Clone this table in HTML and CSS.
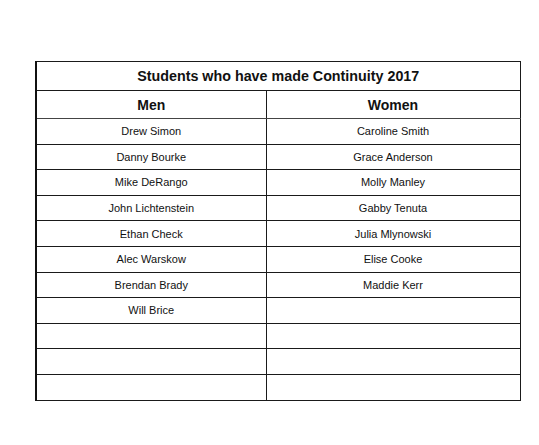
FILE: index.html
```html
<!DOCTYPE html>
<html>
<head>
<meta charset="utf-8">
<link rel="stylesheet" href="styles.css">
</head>
<body>
<table class="roster">
  <colgroup><col class="col-men"><col class="col-women"></colgroup>
  <tr class="title-row"><th colspan="2">Students who have made Continuity 2017</th></tr>
  <tr class="head-row"><th>Men</th><th>Women</th></tr>
  <tr><td>Drew Simon</td><td>Caroline Smith</td></tr>
  <tr><td>Danny Bourke</td><td>Grace Anderson</td></tr>
  <tr><td>Mike DeRango</td><td>Molly Manley</td></tr>
  <tr><td>John Lichtenstein</td><td>Gabby Tenuta</td></tr>
  <tr><td>Ethan Check</td><td>Julia Mlynowski</td></tr>
  <tr><td>Alec Warskow</td><td>Elise Cooke</td></tr>
  <tr><td>Brendan Brady</td><td>Maddie Kerr</td></tr>
  <tr><td>Will Brice</td><td></td></tr>
  <tr><td></td><td></td></tr>
  <tr><td></td><td></td></tr>
  <tr><td></td><td></td></tr>
</table>
</body>
</html>
```
FILE: styles.css
```css
html, body {
  margin: 0;
  padding: 0;
  background: #fff;
}
body {
  padding: 61px 0 0 35px;
  font-family: "Liberation Sans", Arial, sans-serif;
  color: #111;
}
.roster {
  border-collapse: collapse;
  width: 484px;
  table-layout: fixed;
  border-left: 2px solid #111;
}
.col-men { width: 230px; }
.col-women { width: 254px; }
.roster th,
.roster td {
  border: 1px solid #1a1a1a;
  text-align: center;
  padding: 0;
}
.roster .title-row th {
  height: 28px;
  font-size: 14.3px;
  font-weight: bold;
}
.roster .head-row th {
  height: 27px;
  font-size: 14px;
  font-weight: bold;
  border-bottom: 1px solid #444;
}
.roster td {
  height: 24.6px;
  font-size: 11px;
}
```
